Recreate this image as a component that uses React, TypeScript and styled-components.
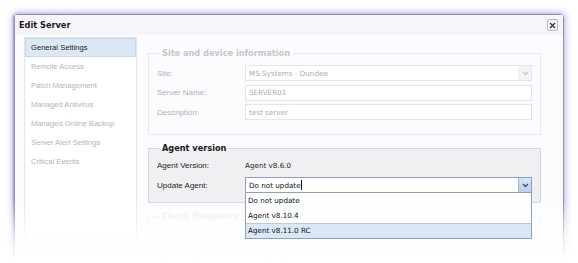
import styled, { createGlobalStyle } from "styled-components";

const GlobalStyle = createGlobalStyle`
  html, body {
    margin: 0;
    padding: 0;
    background: #ffffff;
  }
`;

const Stage = styled.div`
  position: relative;
  width: 578px;
  height: 263px;
  overflow: hidden;
  padding: 14px 0 0 14px;
  box-sizing: border-box;
  background: #ffffff;
`;

const Dialog = styled.div`
  width: 550px;
  height: 300px;
  box-sizing: border-box;
  border: 1px solid #8c8cc6;
  border-radius: 4px 4px 0 0;
  background: #fcfbfe;
  box-shadow: 0 0 6px 2px rgba(120, 120, 200, 0.45), -1px 0 2px rgba(90, 90, 170, 0.5);
  display: flex;
  flex-direction: column;
`;

const TitleBar = styled.div`
  height: 20px;
  display: flex;
  align-items: center;
  justify-content: space-between;
  padding: 0 5px 0 4px;
  background: #f6f5f9;
  font-family: "DejaVu Sans", Verdana, sans-serif;
  font-weight: bold;
  font-size: 8.2px;
  color: #1a1a1a;
`;

const CloseButton = styled.div`
  width: 9px;
  height: 10px;
  border: 1px solid #b8b8c0;
  border-radius: 2px;
  background: #f4f4f6;
  display: flex;
  align-items: center;
  justify-content: center;
`;

const Body = styled.div`
  display: flex;
  padding: 2px 0 0 9px;
  gap: 11px;
`;

const Sidebar = styled.div`
  width: 113px;
  height: 200px;
  box-sizing: border-box;
  border: 1px solid #e4e4ec;
  border-bottom: none;
  background: #ffffff;
  display: flex;
  flex-direction: column;
`;

const NavItem = styled.div<{ $active?: boolean }>`
  height: 19px;
  line-height: 17px;
  padding-left: 5px;
  box-sizing: border-box;
  font-family: "Liberation Sans", Arial, sans-serif;
  font-size: 7.6px;
  color: ${(p) => (p.$active ? "#222222" : "#b4b4b8")};
  background: ${(p) => (p.$active ? "#dde8f4" : "transparent")};
  border: 1px solid ${(p) => (p.$active ? "#c8d7e8" : "transparent")};
`;

const Content = styled.div`
  width: 392px;
  display: flex;
  flex-direction: column;
  gap: 8px;
  padding-top: 11px;
`;

type Tone = "faded" | "active" | "ghost";

const FieldSet = styled.fieldset<{ $tone: Tone }>`
  margin: 0;
  padding: ${(p) => (p.$tone === "active" ? "4px 8px 9px 8px" : "7px 8px 14px 8px")};
  border: 1px solid
    ${(p) => (p.$tone === "active" ? "#d6d6dc" : p.$tone === "faded" ? "#e8e8ee" : "#f2f2f4")};
  background: ${(p) => (p.$tone === "active" ? "#f0f0f2" : "transparent")};
  display: flex;
  flex-direction: column;
  gap: ${(p) => (p.$tone === "active" ? "4px" : "3.5px")};
  font-family: "Liberation Sans", Arial, sans-serif;
  font-size: 8px;
  color: ${(p) => (p.$tone === "active" ? "#1e1e1e" : p.$tone === "faded" ? "#b2b2b6" : "#ebebed")};
`;

const Legend = styled.legend<{ $tone: Tone }>`
  margin-left: 2px;
  padding: 0 3px;
  font-family: "DejaVu Sans", Verdana, sans-serif;
  font-weight: bold;
  font-size: 8.2px;
  color: ${(p) => (p.$tone === "active" ? "#1a1a1a" : p.$tone === "faded" ? "#c6c6ca" : "#ececee")};
`;

const Row = styled.div`
  display: grid;
  grid-template-columns: 88px 287px;
  align-items: center;
  min-height: 16px;
`;

const Field = styled.div<{ $focus?: boolean }>`
  position: relative;
  height: 16px;
  box-sizing: border-box;
  border: 1px solid ${(p) => (p.$focus ? "#86a3c4" : "#e4e4ea")};
  background: #ffffff;
  display: flex;
  align-items: center;
  padding-left: 3px;
  font-family: "DejaVu Sans", Verdana, sans-serif;
  font-size: 7.2px;
  color: ${(p) => (p.$focus ? "#111111" : "#ababb0")};
`;

const ArrowBox = styled.div<{ $focus?: boolean }>`
  position: absolute;
  right: 0;
  top: 0;
  bottom: 0;
  width: 12px;
  display: flex;
  align-items: center;
  justify-content: center;
  border-left: 1px solid ${(p) => (p.$focus ? "#9db4d3" : "#ececf0")};
  background: ${(p) => (p.$focus ? "linear-gradient(#d9e5f5, #bccfea)" : "#f4f4f6")};
`;

const Caret = styled.span`
  display: inline-block;
  width: 1px;
  height: 10px;
  background: #111111;
`;

const Value = styled.div`
  font-family: "DejaVu Sans", Verdana, sans-serif;
  font-size: 7.2px;
`;

const ComboWrap = styled.div`
  position: relative;
`;

const DropList = styled.div`
  position: absolute;
  z-index: 5;
  left: 0;
  top: 15px;
  width: 287px;
  box-sizing: border-box;
  border: 1px solid #86a3c4;
  background: #ffffff;
  display: flex;
  flex-direction: column;
`;

const DropItem = styled.div<{ $hover?: boolean }>`
  height: 15px;
  line-height: 14px;
  box-sizing: border-box;
  padding-left: 2px;
  font-family: "DejaVu Sans", Verdana, sans-serif;
  font-size: 7.2px;
  color: #111111;
  background: ${(p) => (p.$hover ? "#dce7f5" : "#ffffff")};
  border-top: 1px solid ${(p) => (p.$hover ? "#b7cbe6" : "transparent")};
`;

const Fade = styled.div`
  position: absolute;
  left: 0;
  right: 0;
  top: 200px;
  bottom: 0;
  z-index: 3;
  pointer-events: none;
  background: linear-gradient(rgba(255, 255, 255, 0), rgba(255, 255, 255, 0.7) 55%, #ffffff 96%);
`;

const Chevron = ({ color }: { color: string }) => (
  <svg width="7" height="5" viewBox="0 0 7 5">
    <path d="M1 1 L3.5 3.5 L6 1" fill="none" stroke={color} strokeWidth="1.4" />
  </svg>
);

const navItems = [
  "General Settings",
  "Remote Access",
  "Patch Management",
  "Managed Antivirus",
  "Managed Online Backup",
  "Server Alert Settings",
  "Critical Events",
];

export default function App() {
  return (
    <>
      <GlobalStyle />
      <Stage>
        <Dialog>
          <TitleBar>
            <span>Edit Server</span>
            <CloseButton>
              <svg width="7" height="7" viewBox="0 0 7 7">
                <path d="M1 1 L6 6 M6 1 L1 6" stroke="#333" strokeWidth="1.3" />
              </svg>
            </CloseButton>
          </TitleBar>
          <Body>
            <Sidebar>
              {navItems.map((n, i) => (
                <NavItem key={n} $active={i === 0}>
                  {n}
                </NavItem>
              ))}
            </Sidebar>
            <Content>
              <FieldSet $tone="faded">
                <Legend $tone="faded">Site and device information</Legend>
                <Row>
                  <span>Site:</span>
                  <Field>
                    MS Systems - Dundee
                    <ArrowBox>
                      <Chevron color="#c4c4cc" />
                    </ArrowBox>
                  </Field>
                </Row>
                <Row>
                  <span>Server Name:</span>
                  <Field>SERVER01</Field>
                </Row>
                <Row>
                  <span>Description:</span>
                  <Field>test server</Field>
                </Row>
              </FieldSet>
              <FieldSet $tone="active">
                <Legend $tone="active">Agent version</Legend>
                <Row>
                  <span>Agent Version:</span>
                  <Value>Agent v8.6.0</Value>
                </Row>
                <Row>
                  <span>Update Agent:</span>
                  <ComboWrap>
                    <Field $focus>
                      Do not update
                      <Caret />
                      <ArrowBox $focus>
                        <Chevron color="#3c5276" />
                      </ArrowBox>
                    </Field>
                    <DropList>
                      <DropItem>Do not update</DropItem>
                      <DropItem>Agent v8.10.4</DropItem>
                      <DropItem $hover>Agent v8.11.0 RC</DropItem>
                    </DropList>
                  </ComboWrap>
                </Row>
              </FieldSet>
              <FieldSet $tone="ghost">
                <Legend $tone="ghost">Check frequency</Legend>
                <Row>
                  <span>24x7 Frequency:</span>
                  <Value>Every 5 minutes</Value>
                </Row>
                <Row>
                  <span>DSC Frequency:</span>
                  <Value>Once per day</Value>
                </Row>
              </FieldSet>
            </Content>
          </Body>
        </Dialog>
        <Fade />
      </Stage>
    </>
  );
}
